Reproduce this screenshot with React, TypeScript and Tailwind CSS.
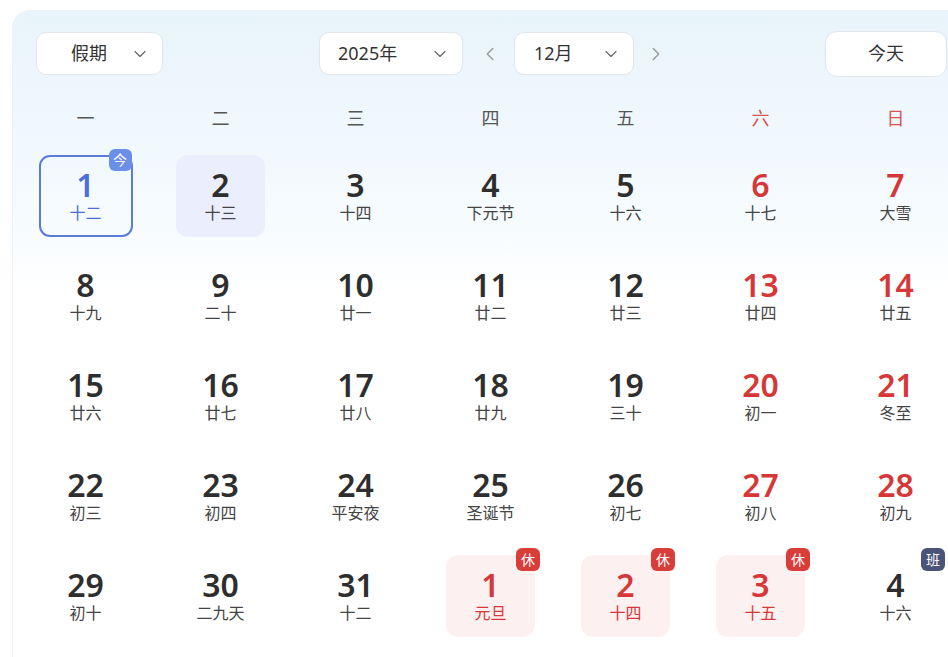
import { ChevronDown, ChevronLeft, ChevronRight } from 'lucide-react'

type Day = {
  d: number
  lunar: string
  red?: boolean
  today?: boolean
  picked?: boolean
  rest?: boolean
  work?: boolean
}

const weekdays = ['一', '二', '三', '四', '五', '六', '日']

const days: Day[] = [
  { d: 1, lunar: '十二', today: true },
  { d: 2, lunar: '十三', picked: true },
  { d: 3, lunar: '十四' },
  { d: 4, lunar: '下元节' },
  { d: 5, lunar: '十六' },
  { d: 6, lunar: '十七', red: true },
  { d: 7, lunar: '大雪', red: true },
  { d: 8, lunar: '十九' },
  { d: 9, lunar: '二十' },
  { d: 10, lunar: '廿一' },
  { d: 11, lunar: '廿二' },
  { d: 12, lunar: '廿三' },
  { d: 13, lunar: '廿四', red: true },
  { d: 14, lunar: '廿五', red: true },
  { d: 15, lunar: '廿六' },
  { d: 16, lunar: '廿七' },
  { d: 17, lunar: '廿八' },
  { d: 18, lunar: '廿九' },
  { d: 19, lunar: '三十' },
  { d: 20, lunar: '初一', red: true },
  { d: 21, lunar: '冬至', red: true },
  { d: 22, lunar: '初三' },
  { d: 23, lunar: '初四' },
  { d: 24, lunar: '平安夜' },
  { d: 25, lunar: '圣诞节' },
  { d: 26, lunar: '初七' },
  { d: 27, lunar: '初八', red: true },
  { d: 28, lunar: '初九', red: true },
  { d: 29, lunar: '初十' },
  { d: 30, lunar: '二九天' },
  { d: 31, lunar: '十二' },
  { d: 1, lunar: '元旦', red: true, rest: true },
  { d: 2, lunar: '十四', red: true, rest: true },
  { d: 3, lunar: '十五', red: true, rest: true },
  { d: 4, lunar: '十六', work: true },
]

function Select({ label, width, textPad }: { label: string; width: string; textPad: string }) {
  return (
    <div
      className={`${width} h-[43px] flex items-center justify-between bg-white border border-[#e2e5ea] rounded-[10px] ${textPad} pr-[12px] text-[18px] text-[#333]`}
    >
      <span>{label}</span>
      <ChevronDown size={20} strokeWidth={1.4} className="text-[#666]" />
    </div>
  )
}

function Cell({ day }: { day: Day }) {
  let box = 'w-[89px] h-[82px] rounded-[12px]'
  if (day.today) box = 'w-[94px] h-[82px] rounded-[11px] border-2 border-[#5b7bd8]'
  if (day.picked) box += ' bg-[#ebeefc]'
  if (day.rest) box += ' bg-[#fdf0f0]'

  let numColor = 'text-[#2e2e2e]'
  if (day.red) numColor = 'text-[#d6383a]'
  if (day.today) numColor = 'text-[#4a6fd6]'

  let lunarColor = 'text-[#444]'
  if (day.rest) lunarColor = 'text-[#d6383a]'
  if (day.today) lunarColor = 'text-[#4a6fd6]'

  return (
    <div className="h-[100px] flex items-center justify-center">
      <div className={`relative flex flex-col items-center justify-center ${box}`}>
        <div className={`text-[32px] leading-[34px] font-semibold ${numColor}`}>{day.d}</div>
        <div className={`text-[16px] leading-[22px] ${lunarColor}`}>{day.lunar}</div>
        {day.today && (
          <span className="absolute -top-[8px] -right-[1px] w-[23px] h-[22px] rounded-[6px] bg-[#6b8ee6] text-white text-[14px] leading-[22px] text-center">
            今
          </span>
        )}
        {day.rest && (
          <span className="absolute -top-[7px] -right-[5px] w-[24px] h-[23px] rounded-[6px] bg-[#d93d3a] text-white text-[14px] leading-[23px] text-center">
            休
          </span>
        )}
        {day.work && (
          <span className="absolute -top-[7px] -right-[5px] w-[24px] h-[23px] rounded-[6px] bg-[#4a5478] text-white text-[14px] leading-[23px] text-center">
            班
          </span>
        )}
      </div>
    </div>
  )
}

export default function App() {
  return (
    <div
      className="w-[948px] h-[657px] overflow-hidden bg-white pt-[10px] pl-[12px]"
      style={{ fontFamily: '"Noto Sans", "Noto Sans CJK SC", sans-serif' }}
    >
      <div className="w-[960px] h-[700px] rounded-tl-[18px] border-l border-t border-[#eef2f5] bg-gradient-to-b from-[#e8f4fb] via-[#f6fbfe] via-30% to-white to-40% pl-[5px]">
        {/* Header */}
        <div className="flex items-center pt-[15px] h-[70px]">
          <div className="ml-[18px]">
            <Select label="假期" width="w-[127px]" textPad="pl-[34px]" />
          </div>
          <div className="ml-[156px]">
            <Select label="2025年" width="w-[144px]" textPad="pl-[18px]" />
          </div>
          <ChevronLeft size={22} strokeWidth={1.5} className="ml-[16px] text-[#999]" />
          <div className="ml-[13px]">
            <Select label="12月" width="w-[120px]" textPad="pl-[19px]" />
          </div>
          <ChevronRight size={22} strokeWidth={1.5} className="ml-[11px] text-[#999]" />
          <div className="ml-[158px] w-[122px] h-[46px] flex items-center justify-center bg-white border border-[#e2e5ea] rounded-[12px] text-[18px] text-[#333]">
            今天
          </div>
        </div>

        {/* Weekdays */}
        <div className="grid grid-cols-[repeat(7,135px)] h-[65px] items-center pt-[10px]">
          {weekdays.map((w, i) => (
            <div
              key={w}
              className={`text-center text-[18px] ${i >= 5 ? 'text-[#d9534f]' : 'text-[#555]'}`}
            >
              {w}
            </div>
          ))}
        </div>

        {/* Days */}
        <div className="grid grid-cols-[repeat(7,135px)]">
          {days.map((day, i) => (
            <Cell key={i} day={day} />
          ))}
        </div>
      </div>
    </div>
  )
}
